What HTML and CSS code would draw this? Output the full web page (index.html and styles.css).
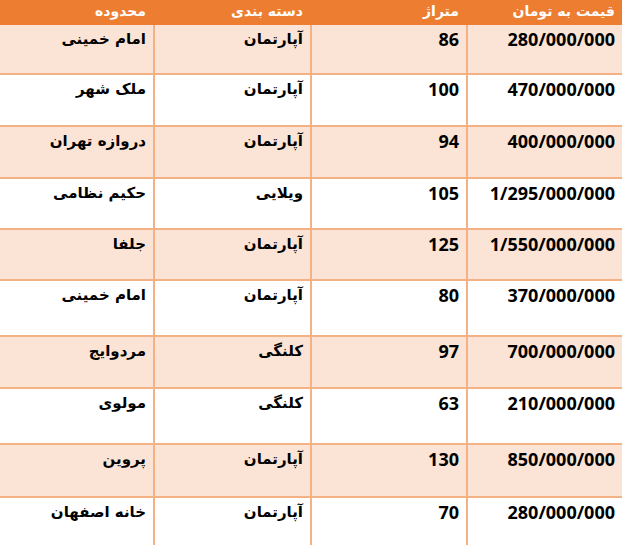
FILE: index.html
```html
<!DOCTYPE html>
<html lang="fa">
<head>
<meta charset="utf-8">
<title>قیمت املاک</title>
<link rel="stylesheet" href="styles.css">
</head>
<body>
<div class="sheet" dir="rtl">
  <div class="row head">
    <div class="cell">قیمت به تومان</div>
    <div class="cell">متراژ</div>
    <div class="cell">دسته بندی</div>
    <div class="cell">محدوده</div>
  </div>
  <div class="row band r1">
    <div class="cell num">280/000/000</div><div class="cell num">86</div><div class="cell fa">آپارتمان</div><div class="cell fa">امام خمینی</div>
  </div>
  <div class="row r2">
    <div class="cell num">470/000/000</div><div class="cell num">100</div><div class="cell fa">آپارتمان</div><div class="cell fa">ملک شهر</div>
  </div>
  <div class="row band r3">
    <div class="cell num">400/000/000</div><div class="cell num">94</div><div class="cell fa">آپارتمان</div><div class="cell fa">دروازه تهران</div>
  </div>
  <div class="row r4">
    <div class="cell num">1/295/000/000</div><div class="cell num">105</div><div class="cell fa">ویلایی</div><div class="cell fa">حکیم نظامی</div>
  </div>
  <div class="row band r5">
    <div class="cell num">1/550/000/000</div><div class="cell num">125</div><div class="cell fa">آپارتمان</div><div class="cell fa">جلفا</div>
  </div>
  <div class="row r6">
    <div class="cell num">370/000/000</div><div class="cell num">80</div><div class="cell fa">آپارتمان</div><div class="cell fa">امام خمینی</div>
  </div>
  <div class="row band r7">
    <div class="cell num">700/000/000</div><div class="cell num">97</div><div class="cell fa">کلنگی</div><div class="cell fa">مردوایج</div>
  </div>
  <div class="row r8">
    <div class="cell num">210/000/000</div><div class="cell num">63</div><div class="cell fa">کلنگی</div><div class="cell fa">مولوی</div>
  </div>
  <div class="row band r9">
    <div class="cell num">850/000/000</div><div class="cell num">130</div><div class="cell fa">آپارتمان</div><div class="cell fa">پروین</div>
  </div>
  <div class="row r10">
    <div class="cell num">280/000/000</div><div class="cell num">70</div><div class="cell fa">آپارتمان</div><div class="cell fa">خانه اصفهان</div>
  </div>
</div>
</body>
</html>
```

FILE: styles.css
```css
html, body {
  margin: 0;
  padding: 0;
  background: #ffffff;
  overflow: hidden;
}

.sheet {
  width: 622px;
  display: flex;
  flex-direction: column;
}

.row {
  display: grid;
  grid-template-columns: 156px 156px 157px 153px;
  box-sizing: border-box;
  height: 52px;
  border-bottom: 2px solid #f4b183;
  background: #ffffff;
}

.row.band {
  background: #fbe4d5;
}

.row.head {
  height: 25px;
  background: #ed7d31;
  border-bottom: none;
}

.cell {
  box-sizing: border-box;
  border-left: 2px solid #f4b183;
  padding: 3px 7px 0 6px;
  text-align: right;
  color: #000000;
  white-space: nowrap;
  overflow: hidden;
}

.cell:last-child {
  border-left: none;
}

.head .cell {
  border-left: none;
  color: #ffffff;
  font-family: "DejaVu Sans", sans-serif;
  font-weight: bold;
  font-size: 14px;
  line-height: 20px;
  padding-top: 1px;
}

.num {
  font-family: "Open Sans", sans-serif;
  font-weight: bold;
  font-size: 18px;
  line-height: 22px;
}

.fa {
  font-family: "DejaVu Sans", sans-serif;
  font-weight: bold;
  font-size: 15px;
  line-height: 22px;
  padding-top: 3px;
}

.r1 { height: 50px; }
.r2 { height: 52px; }
.r3 { height: 52px; }
.r4 { height: 51px; }
.r5 { height: 51px; }
.r6 { height: 56px; }
.r7 { height: 52px; }
.r8 { height: 56px; }
.r9 { height: 53px; }
.r10 { height: 52px; }
```
